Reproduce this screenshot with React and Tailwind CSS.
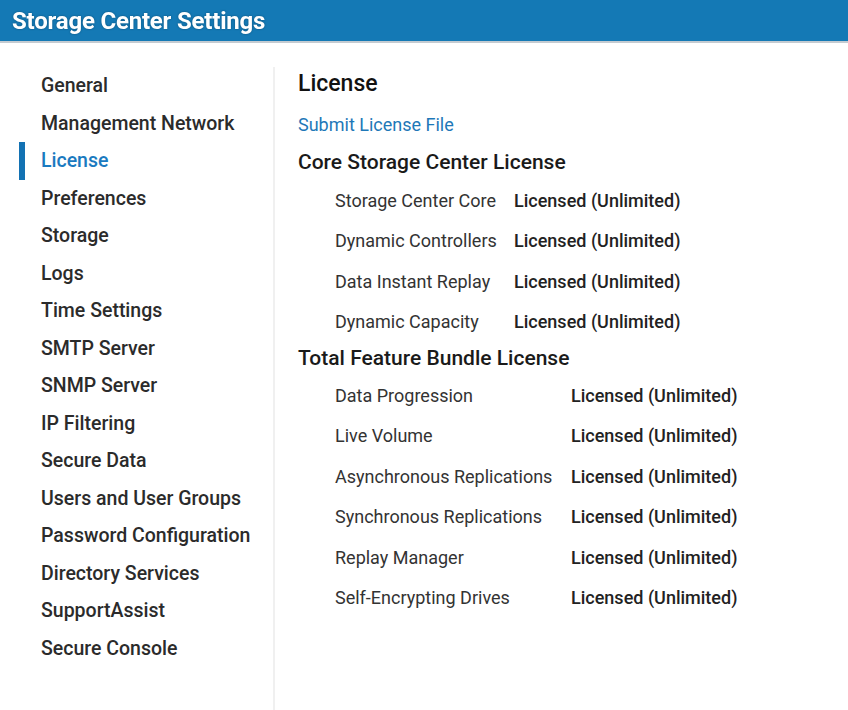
import React from 'react';

const navItems = [
  'General',
  'Management Network',
  'License',
  'Preferences',
  'Storage',
  'Logs',
  'Time Settings',
  'SMTP Server',
  'SNMP Server',
  'IP Filtering',
  'Secure Data',
  'Users and User Groups',
  'Password Configuration',
  'Directory Services',
  'SupportAssist',
  'Secure Console',
];

const coreRows = [
  'Storage Center Core',
  'Dynamic Controllers',
  'Data Instant Replay',
  'Dynamic Capacity',
];

const bundleRows = [
  'Data Progression',
  'Live Volume',
  'Asynchronous Replications',
  'Synchronous Replications',
  'Replay Manager',
  'Self-Encrypting Drives',
];

const LicenseTable = ({ rows, labelWidth }) => (
  <div className="pl-[37px] flex flex-col">
    {rows.map((row) => (
      <div key={row} className="flex items-center h-[40.5px]">
        <span className={`${labelWidth} text-[18px] text-[#333333]`}>{row}</span>
        <span className="text-[18px] font-medium text-[#222222]">Licensed (Unlimited)</span>
      </div>
    ))}
  </div>
);

export default function App() {
  return (
    <div className="w-[848px] h-[710px] bg-white overflow-hidden font-['Roboto',sans-serif]">
      <div className="h-[43px] bg-[#1479b5] border-b-2 border-[#c4cbd1] flex items-center px-3">
        <h1 className="text-[24px] font-bold text-white tracking-[-0.2px] drop-shadow-[0_0_1px_rgba(0,0,0,0.3)]">
          Storage Center Settings
        </h1>
      </div>

      <div className="flex h-[667px]">
        <nav className="w-[275px] mt-[24px] border-r-2 border-[#f0f0f0] flex flex-col">
          {navItems.map((item) => {
            const active = item === 'License';
            return (
              <div key={item} className="relative h-[37.5px] flex items-center pl-[41px]">
                {active && (
                  <span className="absolute left-[19px] top-0 w-[6px] h-[37.5px] bg-[#1372b3]" />
                )}
                <span
                  className={`text-[19.5px] font-medium ${active ? 'text-[#1a7ac0]' : 'text-[#2b2b2b]'}`}
                >
                  {item}
                </span>
              </div>
            );
          })}
        </nav>

        <main className="flex-1 pl-[23px] pt-[21px]">
          <h2 className="h-[40px] flex items-center text-[23px] font-medium text-[#111111]">License</h2>
          <div className="h-[40px] flex items-center text-[18px] text-[#1e78b8]">Submit License File</div>
          <h3 className="h-[36px] flex items-center pt-[2px] text-[21px] font-medium text-[#1a1a1a]">
            Core Storage Center License
          </h3>
          <LicenseTable rows={coreRows} labelWidth="w-[179px]" />
          <h3 className="h-[33px] flex items-center text-[21px] font-medium text-[#1a1a1a]">
            Total Feature Bundle License
          </h3>
          <LicenseTable rows={bundleRows} labelWidth="w-[236px]" />
        </main>
      </div>
    </div>
  );
}
